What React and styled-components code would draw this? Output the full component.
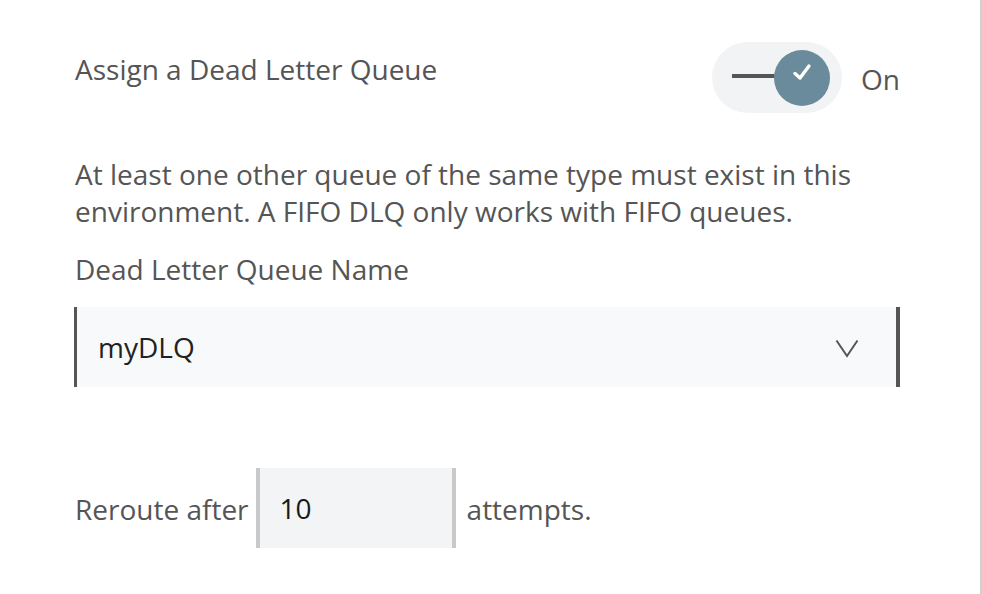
import React from 'react'
import styled, { createGlobalStyle } from 'styled-components'

const GlobalStyle = createGlobalStyle`
    html, body {
        margin: 0;
        padding: 0;
        background: #fff;
    }
    body {
        font-family: "Open Sans", "Noto Sans", sans-serif;
        -webkit-font-smoothing: antialiased;
    }
`

function App() {
    return (
        <>
        <GlobalStyle />
        <Panel>
            <HeaderRow>
                <Title>Assign a Dead Letter Queue</Title>
                <SwitchGroup>
                    <Track>
                        <TrackLine />
                        <Knob>
                            <svg width="20" height="18" viewBox="0 0 20 18" fill="none">
                                <path d="M3 10.5 L8 15 L17 3" stroke="#fff" strokeWidth="3.4" strokeLinecap="round" strokeLinejoin="round" />
                            </svg>
                        </Knob>
                    </Track>
                    <SwitchLabel>On</SwitchLabel>
                </SwitchGroup>
            </HeaderRow>

            <Help>
                At least one other queue of the same type must exist in this
                <br />
                environment. A FIFO DLQ only works with FIFO queues.
            </Help>

            <FieldLabel>Dead Letter Queue Name</FieldLabel>
            <Select>
                <SelectValue>myDLQ</SelectValue>
                <Chevron>
                    <svg width="24" height="19" viewBox="0 0 24 19" fill="none">
                        <path d="M1.5 1.5 L12 17 L22.5 1.5" stroke="#555" strokeWidth="2" />
                    </svg>
                </Chevron>
            </Select>

            <RerouteRow>
                <InlineText>Reroute after</InlineText>
                <NumberBox>10</NumberBox>
                <InlineText>attempts.</InlineText>
            </RerouteRow>
        </Panel>
        </>
    )
}

export default App

const Panel = styled.div`
    box-sizing: border-box;
    width: 982px;
    height: 594px;
    padding: 42px 80px 0 74px;
    border-right: 2px solid #cfcfcf;
    color: #555;
    font-size: 28px;
    line-height: 37px;
`

const HeaderRow = styled.div`
    display: flex;
    justify-content: space-between;
    align-items: flex-start;
`

const Title = styled.div`
    margin-top: 9px;
    padding-left: 1px;
`

const SwitchGroup = styled.div`
    display: flex;
    align-items: center;
    gap: 19px;
`

const Track = styled.div`
    position: relative;
    width: 130px;
    height: 71px;
    border-radius: 36px;
    background: #f2f3f5;
`

const TrackLine = styled.div`
    position: absolute;
    left: 20px;
    top: 32px;
    width: 50px;
    height: 4px;
    background: #555;
`

const Knob = styled.div`
    position: absolute;
    left: 62px;
    top: 8px;
    width: 56px;
    height: 56px;
    border-radius: 50%;
    background: #6a8b9b;
    display: flex;
    align-items: center;
    justify-content: center;

    svg {
        margin-top: -12px;
    }
`

const SwitchLabel = styled.span`
    margin-top: 4px;
    color: #555;
`

const Help = styled.p`
    margin: 43px 0 0 1px;
`

const FieldLabel = styled.div`
    margin: 21px 0 0 1px;
`

const Select = styled.div`
    box-sizing: border-box;
    margin-top: 19px;
    height: 80px;
    display: flex;
    align-items: center;
    justify-content: space-between;
    background: #f8f9fa;
    border-left: 3px solid #555;
    border-right: 4px solid #555;
    padding: 0 37px 0 21px;
`

const SelectValue = styled.span`
    color: #222;
`

const Chevron = styled.span`
    display: flex;
    margin-top: 3px;
`

const RerouteRow = styled.div`
    margin-top: 81px;
    display: flex;
    align-items: center;
`

const InlineText = styled.span`
    padding: 3px 1px 0;
`

const NumberBox = styled.div`
    box-sizing: border-box;
    width: 200px;
    height: 80px;
    margin: 0 10px 0 6px;
    padding: 0 20px;
    display: flex;
    align-items: center;
    background: #f3f4f6;
    border-left: 4px solid #c9c9c9;
    border-right: 4px solid #c9c9c9;
    color: #1a1a1a;
`
